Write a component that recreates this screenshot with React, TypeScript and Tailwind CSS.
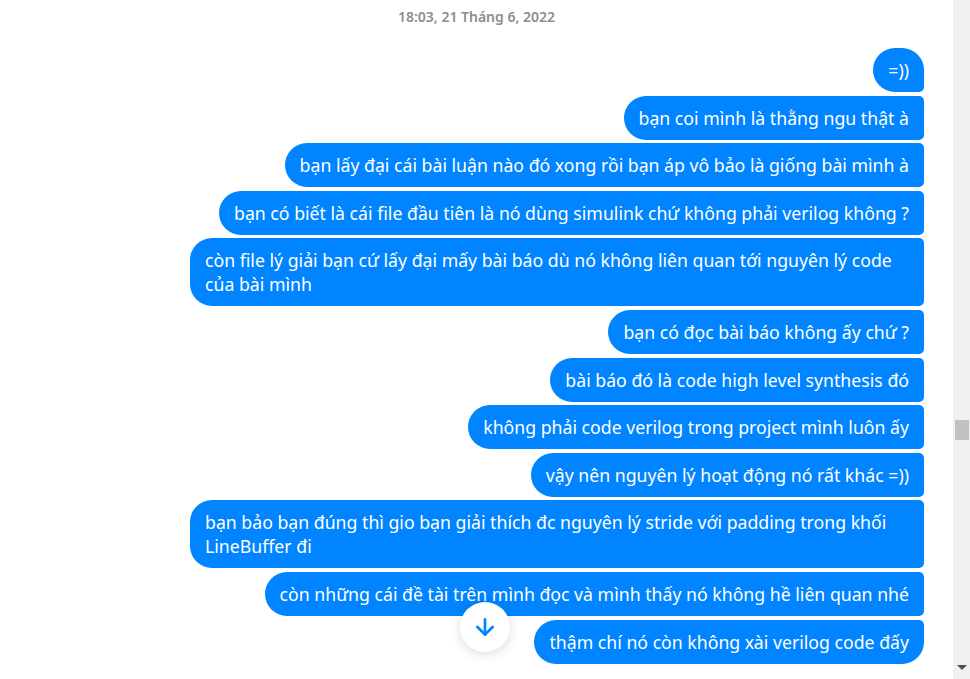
import React from 'react';
import { ArrowDown } from 'lucide-react';

const messages: string[] = [
  '=))',
  'bạn coi mình là thằng ngu thật à',
  'bạn lấy đại cái bài luận nào đó xong rồi bạn áp vô bảo là giống bài mình à',
  'bạn có biết là cái file đầu tiên là nó dùng simulink chứ không phải verilog không ?',
  'còn file lý giải bạn cứ lấy đại mấy bài báo dù nó không liên quan tới nguyên lý code của bài mình',
  'bạn có đọc bài báo không ấy chứ ?',
  'bài báo đó là code high level synthesis đó',
  'không phải code verilog trong project mình luôn ấy',
  'vậy nên nguyên lý hoạt động nó rất khác =))',
  'bạn bảo bạn đúng thì gio bạn giải thích đc nguyên lý stride với padding trong khối LineBuffer đi',
  'còn những cái đề tài trên mình đọc và mình thấy nó không hề liên quan nhé',
  'thậm chí nó còn không xài verilog code đấy',
];

function Bubble({ text, index, total }: { text: string; index: number; total: number }) {
  let corners = 'rounded-l-[22px] rounded-r-[5px]';
  if (index === 0) corners = 'rounded-l-[22px] rounded-tr-[22px] rounded-br-[5px]';
  if (index === total - 1) corners = 'rounded-l-[22px] rounded-tr-[5px] rounded-br-[22px]';
  return (
    <div className={`max-w-[734px] bg-[#0084ff] px-[15px] py-[10px] text-[17.7px] leading-[24px] text-white ${corners}`}>
      {text}
    </div>
  );
}

export default function App() {
  return (
    <div
      className="flex h-[679px] w-[970px] overflow-hidden bg-white"
      style={{ fontFamily: '"Noto Sans", "Open Sans", sans-serif' }}
    >
      <div className="relative flex-1">
        <div className="pt-[8px] text-center text-[14px] font-semibold leading-[18px] text-[#8a8d91]">
          18:03, 21 Tháng 6, 2022
        </div>
        <div className="mt-[22px] flex flex-col items-end gap-[3.6px] pr-[29px]">
          {messages.map((m, i) => (
            <Bubble key={i} text={m} index={i} total={messages.length} />
          ))}
        </div>
        <button className="absolute left-[460px] top-[602px] flex h-[50px] w-[50px] items-center justify-center rounded-full bg-white shadow-[0_2px_12px_rgba(0,0,0,0.15)]">
          <ArrowDown className="h-[26px] w-[26px] text-[#0084ff]" strokeWidth={2.5} />
        </button>
      </div>
      <div className="relative w-[17px] bg-[#f1f1f1]">
        <div className="absolute left-[2px] top-[420px] h-[20px] w-[14px] bg-[#c1c1c1]" />
        <div className="absolute bottom-[9px] left-[4px] h-0 w-0 border-l-[5px] border-r-[5px] border-t-[5px] border-l-transparent border-r-transparent border-t-[#505050]" />
      </div>
    </div>
  );
}
